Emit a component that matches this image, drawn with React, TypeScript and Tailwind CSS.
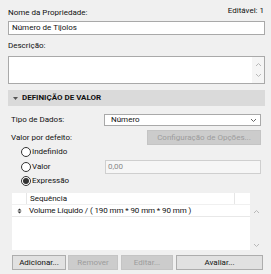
import React from "react";

// Property definition panel — compact dialog-style form.

function ChevronUp() {
  return (
    <svg width="7" height="5" viewBox="0 0 7 5" className="block">
      <path d="M1 4 L3.5 1.5 L6 4" fill="none" stroke="#b8b8b8" strokeWidth="1" />
    </svg>
  );
}

function ChevronDown({ color = "#b8b8b8" }: { color?: string }) {
  return (
    <svg width="7" height="5" viewBox="0 0 7 5" className="block">
      <path d="M1 1 L3.5 3.5 L6 1" fill="none" stroke={color} strokeWidth="1" />
    </svg>
  );
}

function Radio({ checked, label }: { checked?: boolean; label: string }) {
  return (
    <div className="flex h-[14px] items-center gap-[1px]">
      <span className="flex h-[10px] w-[10px] items-center justify-center rounded-full border border-[#333] bg-white">
        {checked && <span className="h-[6px] w-[6px] rounded-full bg-[#333]" />}
      </span>
      <span>{label}</span>
    </div>
  );
}

function Button({ label, disabled, className }: { label: string; disabled?: boolean; className: string }) {
  return (
    <button
      type="button"
      className={
        "flex h-[15px] items-center justify-center border " +
        (disabled
          ? "border-[#c4c4c4] bg-[#cccccc] text-[#9c9c9c] "
          : "border-[#adadad] bg-[#e1e1e1] text-[#111] ") +
        className
      }
    >
      {label}
    </button>
  );
}

export default function App() {
  return (
    <div
      className="flex h-[274px] w-[271px] flex-col bg-[#f0f0f0] text-[8px] leading-none text-[#111]"
      style={{ fontFamily: "Roboto, 'Liberation Sans', sans-serif" }}
    >
      {/* name */}
      <div className="flex items-start justify-between pl-[8px] pr-[7px] pt-[8px]">
        <span className="mt-[1px]">Nome da Propriedade:</span>
        <span className="-mt-[1px]">Editável: 1</span>
      </div>
      <div className="mx-[8px] mt-[4px] flex h-[14px] w-[257px] items-center border border-[#a9a9a9] bg-white px-[3px]">
        Número de Tijolos
      </div>

      {/* description */}
      <div className="ml-[8px] mt-[7px]">Descrição:</div>
      <div className="mx-[8px] mt-[6px] flex h-[28px] w-[257px] border border-[#a9a9a9] bg-white">
        <div className="flex-1" />
        <div className="flex w-[12px] flex-col items-center justify-between bg-[#f5f5f5] py-[5px]">
          <ChevronUp />
          <ChevronDown />
        </div>
      </div>

      {/* section header */}
      <div className="mx-[8px] mt-[6px] flex h-[16px] w-[257px] items-center gap-[4px] bg-[#dadada] pl-[5px] font-bold">
        <svg width="5" height="3" viewBox="0 0 5 3" className="block">
          <path d="M0 0 L5 0 L2.5 3 Z" fill="#555" />
        </svg>
        <span>DEFINIÇÃO DE VALOR</span>
      </div>

      {/* data type */}
      <div className="mt-[8px] flex items-center pl-[11px] pr-[10px]">
        <span className="w-[93px]">Tipo de Dados:</span>
        <div className="flex h-[12px] flex-1 items-center justify-between border border-[#a9a9a9] bg-white pl-[6px] pr-[3px]">
          <span>Número</span>
          <ChevronDown color="#666" />
        </div>
      </div>

      {/* default value */}
      <div className="mt-[4px] flex items-center justify-between pl-[11px] pr-[10px]">
        <span>Valor por defeito:</span>
        <Button label="Configuração de Opções..." disabled className="w-[114px]" />
      </div>

      <div className="flex flex-col pl-[21px] pr-[10px]">
        <Radio label="Indefinido" />
        <div className="mt-[1px] flex items-center justify-between">
          <Radio label="Valor" />
          <div className="flex h-[14px] w-[156px] items-center border border-[#cfcfcf] bg-[#f6f6f6] px-[2px] text-[#8a8a8a]">
            0,00
          </div>
        </div>
        <Radio checked label="Expressão" />
      </div>

      {/* expression list */}
      <div className="ml-[12px] mt-[5px] flex h-[57px] w-[250px]">
        <div className="flex w-[238px] flex-col bg-white">
          <div className="flex h-[12px] border-b border-[#f0f0f0]">
            <div className="w-[15px] border-r border-[#e6e6e6]" />
            <div className="flex flex-1 items-center border-r border-[#e6e6e6] pl-[3px]">Sequência</div>
            <div className="w-[15px]" />
          </div>
          <div className="flex h-[12px] items-center border-b border-[#e8e8e8]">
            <div className="flex w-[15px] justify-center">
              <svg width="5" height="6" viewBox="0 0 5 6" className="block">
                <path d="M0.5 2.5 L2.5 0.5 L4.5 2.5 Z M0.5 3.5 L4.5 3.5 L2.5 5.5 Z" fill="#333" />
              </svg>
            </div>
            <span className="pl-[2px] tracking-[-0.1px]">Volume Líquido / ( 190 mm * 90 mm * 90 mm )</span>
          </div>
        </div>
        <div className="flex w-[12px] flex-col items-center justify-between pb-[2px] pt-[16px]">
          <ChevronUp />
          <ChevronDown />
        </div>
      </div>

      {/* actions */}
      <div className="ml-[12px] mt-[5px] flex gap-[2px]">
        <Button label="Adicionar..." className="w-[54px]" />
        <Button label="Remover" disabled className="w-[50px]" />
        <Button label="Editar..." disabled className="ml-[1px] w-[52px]" />
        <Button label="Avaliar..." className="ml-[1px] w-[87px]" />
      </div>
    </div>
  );
}
